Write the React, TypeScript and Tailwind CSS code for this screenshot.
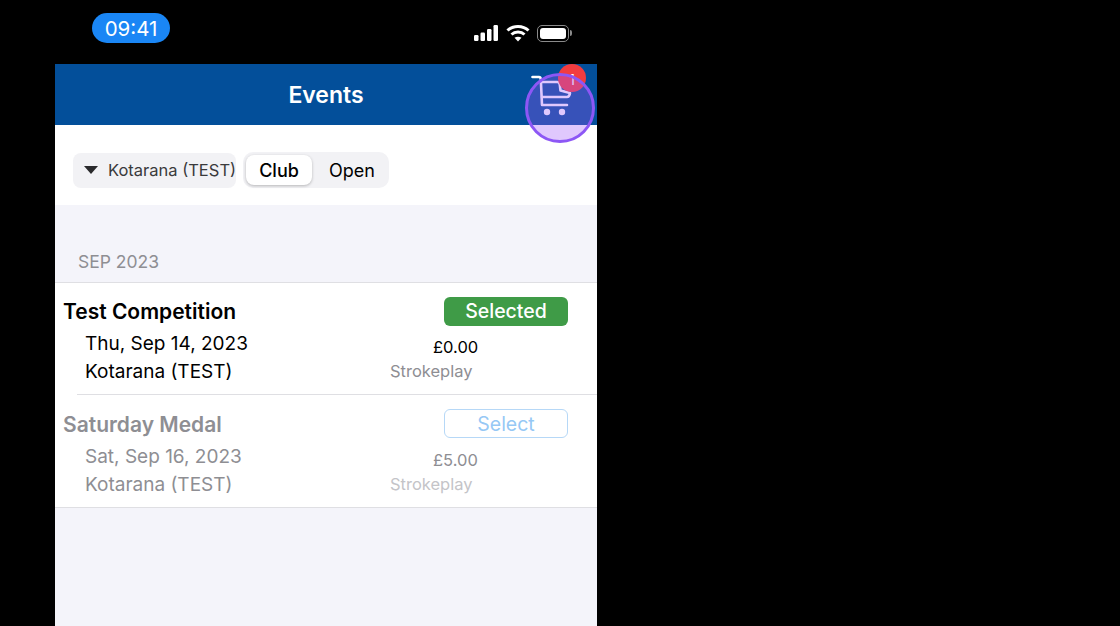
const FONT = "font-['Inter','Liberation_Sans',sans-serif]";

function StatusIcons() {
  return (
    <div className="flex items-center gap-[7px] pr-[25px] pt-[2px]">
      <svg className="ml-px" width="25" height="16" viewBox="0 0 25 16" fill="white">
        <rect x="0" y="10" width="4.5" height="6" rx="1.2" />
        <rect x="6.5" y="7.5" width="4.5" height="8.5" rx="1.2" />
        <rect x="13" y="4" width="4.5" height="12" rx="1.2" />
        <rect x="19.5" y="0" width="4.5" height="16" rx="1.2" />
      </svg>
      <svg width="24" height="18" viewBox="0 0 24 18" fill="none" stroke="white" strokeWidth="3">
        <path d="M1.5 6.5C7 1 17 1 22.5 6.5" />
        <path d="M5.5 10.5C9 7.2 15 7.2 18.5 10.5" />
        <path d="M12 17.5 8.5 13.8C10.5 12.3 13.5 12.3 15.5 13.8Z" fill="white" stroke="none" />
      </svg>
      <div className="flex items-center">
        <div className="flex h-[17px] w-[32px] items-center rounded-[5px] border border-[#8a8a8a] p-[2px]">
          <div className="h-full w-full rounded-[3px] bg-white" />
        </div>
        <div className="ml-[1px] h-[6px] w-[2px] rounded-r bg-[#8a8a8a]" />
      </div>
    </div>
  );
}

function CartOverlay() {
  return (
    <>
      <svg
        className="absolute left-[530px] top-[72px]"
        width="44"
        height="46"
        viewBox="0 0 44 46"
        fill="none"
        stroke="white"
        strokeWidth="2.6"
        strokeLinecap="round"
        strokeLinejoin="round"
      >
        <path d="M2.500 5H9Q10.500 5 10.800 7L12 33H37" />
        <path d="M11 10H27Q29.500 10 29.800 12.500L30.500 18.500L40 21Q39.500 25 37 25H12" />
        <circle cx="17" cy="40" r="3.2" fill="white" stroke="none" />
        <circle cx="32" cy="40" r="3.2" fill="white" stroke="none" />
      </svg>
      <div className="absolute left-[558px] top-[64px] flex h-[28px] w-[28px] items-center justify-center rounded-full bg-[#f23c40] pt-[2px] text-[14px] text-white">
        1
      </div>
      <div className="absolute left-[525px] top-[73px] h-[70px] w-[70px] rounded-full border-[3px] border-[#8d57f5] bg-[#a058fa]/33" />
    </>
  );
}

function EventRow(props: {
  title: string;
  date: string;
  price: string;
  selected?: boolean;
}) {
  const { selected } = props;
  return (
    <div className={`pl-[8px] pr-[29px] ${selected ? "h-[111px] pt-[14px]" : "h-[112px] pt-[15px]"}`}>
      <div className="flex h-[29px] items-center justify-between">
        <span className={`text-[21px] font-semibold ${selected ? "text-black" : "text-[#8e8e93]"}`}>
          {props.title}
        </span>
        {selected ? (
          <button className="h-[29px] w-[124px] rounded-[6px] bg-[#3f9b47] text-[19.5px] font-medium text-white">
            Selected
          </button>
        ) : (
          <button className="mb-[2px] h-[29px] w-[124px] rounded-[6px] border border-[#b6d8f7] bg-white text-[19.5px] text-[#96c8f5]">
            Select
          </button>
        )}
      </div>
      <div className="flex">
        <div className={`w-[327px] pl-[22px] text-[19px] leading-[28px] ${selected ? "text-black" : "text-[#8e8e93]"}`}>
          <div className="mt-[4px]">{props.date}</div>
          <div>Kotarana (TEST)</div>
        </div>
        <div className="text-[16.5px] leading-[24px]">
          <div className={`ml-[43px] mt-[9px] ${selected ? "text-black" : "text-[#8e8e93]"}`}>{props.price}</div>
          <div className={selected ? "text-[#8e8e93]" : "text-[#c4c4c8]"}>Strokeplay</div>
        </div>
      </div>
    </div>
  );
}

export default function App() {
  return (
    <div className={`relative flex h-[626px] w-[1120px] overflow-hidden bg-black ${FONT}`}>
      <div className="ml-[55px] flex w-[542px] flex-col">
        {/* Status bar */}
        <div className="flex h-[64px] -ml-[55px] w-[597px] items-center justify-between bg-black">
          <div className="ml-[92px] -mt-[8px] flex h-[30px] w-[78px] items-center justify-center rounded-full bg-[#1a86f5] pt-[2px] text-[20.5px] text-white">
            09:41
          </div>
          <StatusIcons />
        </div>

        {/* Nav bar */}
        <div className="flex h-[61px] items-center justify-center bg-[#034f9a] pt-[2px] text-[23px] font-semibold text-white">
          Events
        </div>

        {/* Filters */}
        <div className="flex h-[80px] items-center gap-[7px] bg-white pt-[10px] pl-[18px]">
          <div className="flex h-[35px] w-[163px] items-center gap-[10px] rounded-[8px] bg-[#f2f2f5] pl-[11px] text-[16.5px] whitespace-nowrap text-[#3a3a3c]">
            <div className="h-0 w-0 border-x-[7px] border-t-[8px] border-x-transparent border-t-[#2a2a2c]" />
            Kotarana (TEST)
          </div>
          <div className="flex h-[36px] w-[146px] items-center rounded-[10px] bg-[#f2f2f5] p-[2px] text-[18px] text-black">
            <div className="ml-[1px] flex h-[30px] w-[66px] items-center justify-center rounded-[8px] bg-white font-medium shadow-[0_1px_3px_rgba(0,0,0,0.25)]">
              Club
            </div>
            <div className="flex flex-1 items-center justify-center pl-[5px]">Open</div>
          </div>
        </div>

        {/* List */}
        <div className="flex flex-1 flex-col bg-[#f4f4fa]">
          <div className="flex h-[78px] items-end border-b border-[#dfdfe3] pb-[7px] pl-[23px] text-[17.5px] text-[#8e8e93]">
            SEP 2023
          </div>
          <div className="border-b border-[#dfdfe3] bg-white">
            <EventRow title="Test Competition" date="Thu, Sep 14, 2023" price="£0.00" selected />
            <div className="ml-[22px] h-px bg-[#dfdfe3]" />
            <EventRow title="Saturday Medal" date="Sat, Sep 16, 2023" price="£5.00" />
          </div>
        </div>
      </div>
      <CartOverlay />
    </div>
  );
}
